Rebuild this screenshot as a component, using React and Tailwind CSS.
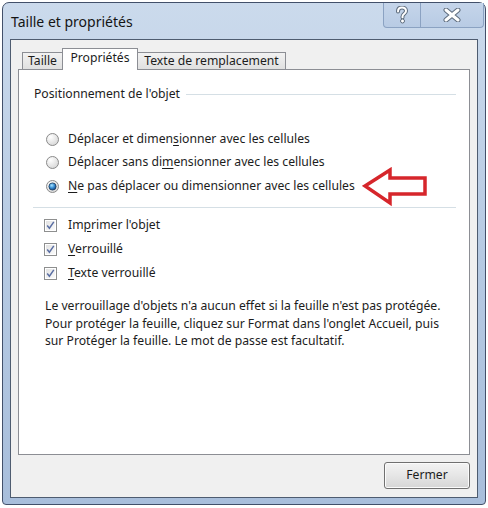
import React from "react";

function Radio({ checked }) {
  return (
    <svg width="13" height="13" viewBox="0 0 13 13" className="shrink-0">
      <defs>
        <radialGradient id="rg" cx="0.35" cy="0.3" r="0.8">
          <stop offset="0" stopColor="#ffffff" />
          <stop offset="1" stopColor="#d4d4d4" />
        </radialGradient>
        <radialGradient id="dot" cx="0.4" cy="0.35" r="0.7">
          <stop offset="0" stopColor="#a9e4ff" />
          <stop offset="0.5" stopColor="#3a8fd4" />
          <stop offset="1" stopColor="#0e3f7a" />
        </radialGradient>
      </defs>
      <circle cx="6.5" cy="6.5" r="6" fill="url(#rg)" stroke="#8a8a8a" strokeWidth="1" />
      {checked && <circle cx="6.5" cy="6.5" r="3.6" fill="url(#dot)" stroke="#1d3b5c" strokeWidth="0.8" />}
    </svg>
  );
}

function Check() {
  return (
    <svg width="13" height="13" viewBox="0 0 13 13" className="shrink-0">
      <defs>
        <linearGradient id="cg" x1="0" y1="0" x2="1" y2="1">
          <stop offset="0" stopColor="#e2e2e2" />
          <stop offset="1" stopColor="#fbfbfb" />
        </linearGradient>
      </defs>
      <rect x="0.5" y="0.5" width="12" height="12" fill="#fff" stroke="#8e8f8f" />
      <rect x="2" y="2" width="9" height="9" fill="url(#cg)" />
      <path d="M3.2 6.6 L5.4 9.2 L9.8 2.9" fill="none" stroke="#5a6ea3" strokeWidth="1.5" />
    </svg>
  );
}

function U({ children }) {
  return <span className="underline underline-offset-2">{children}</span>;
}

export default function App() {
  return (
    <div className="w-[488px] h-[508px] bg-white pl-[2px] pr-[2px] pt-[2px] pb-[3px] font-['Noto_Sans',sans-serif] text-[#1c1c1c]">
      <div className="h-full flex flex-col rounded-t-[7px] rounded-b-[4px] border border-[#42506a] bg-gradient-to-b from-[#cbdaec] via-[#b6cae3] to-[#a8bedb] px-[7px] pb-[6px]">
        <div className="h-[36px] flex items-start justify-between">
          <span className="pt-[10px] pl-[1px] text-[14px] leading-[18px] text-[#141414]">Taille et propriétés</span>
          <div className="flex -mr-[6px] h-[25px]">
            <div className="w-[38px] h-full flex items-center justify-center border border-t-0 border-[#8ba2c2] rounded-bl-[4px] bg-gradient-to-b from-[#c5d5ea] to-[#b8cbe4]">
              <svg width="14" height="18" viewBox="0 0 14 18">
                <path d="M3 5.5 C3 2.5 5 1.5 7 1.5 C9.5 1.5 11 3 11 5 C11 7.5 7.5 8 7.5 10.5 L7.5 11.5" fill="none" stroke="#5d6b7c" strokeWidth="4" strokeLinecap="round" />
                <path d="M3 5.5 C3 2.5 5 1.5 7 1.5 C9.5 1.5 11 3 11 5 C11 7.5 7.5 8 7.5 10.5 L7.5 11.5" fill="none" stroke="#ffffff" strokeWidth="2" strokeLinecap="round" />
                <circle cx="7.5" cy="15" r="2" fill="#ffffff" stroke="#5d6b7c" strokeWidth="1" />
              </svg>
            </div>
            <div className="w-[63px] h-full flex items-center justify-center border border-l-0 border-t-0 border-[#8ba2c2] rounded-br-[4px] bg-gradient-to-b from-[#c5d5ea] to-[#b8cbe4]">
              <svg width="20" height="14" viewBox="0 0 20 14">
                <path d="M4 2 L16 12 M16 2 L4 12" fill="none" stroke="#5d6b7c" strokeWidth="5" strokeLinecap="round" />
                <path d="M4 2 L16 12 M16 2 L4 12" fill="none" stroke="#ffffff" strokeWidth="3" strokeLinecap="round" />
              </svg>
            </div>
          </div>
        </div>
        <div className="flex-1 flex flex-col border border-[#4e5c70] bg-[#f0f0f0] text-[12.2px]">
          <div className="flex items-end pt-[8px] px-[7px]">
            <div className="flex items-end pl-[4px]">
              <div className="w-[41px] h-[17px] flex items-center justify-center border border-b-0 border-[#8c8e94] bg-gradient-to-b from-[#f2f2f2] to-[#e0e0e0] leading-none">Taille</div>
              <div className="relative z-10 -ml-px -mb-px w-[76px] h-[22px] flex items-start pt-[2px] justify-center border border-b-0 border-[#8c8e94] bg-white leading-[14px]">Propriétés</div>
              <div className="-ml-px w-[149px] h-[17px] flex items-center justify-center border border-b-0 border-[#8c8e94] bg-gradient-to-b from-[#f2f2f2] to-[#e0e0e0] leading-none">Texte de remplacement</div>
            </div>
          </div>
          <div className="relative mx-[7px] h-[386px] border border-[#8c8e94] bg-white">
            <div className="flex items-center pt-[16px] pl-[15px] pr-[13px] h-[32px]">
              <span className="leading-[16px]">Positionnement de l'objet</span>
              <div className="flex-1 ml-[6px] h-px bg-[#d5dfe5]" />
            </div>
            <div className="mt-[25px] flex flex-col pl-[27px]">
              <div className="h-[24px] flex items-center gap-[9px]">
                <Radio />
                <span>Déplacer et dimen<U>s</U>ionner avec les cellules</span>
              </div>
              <div className="h-[23px] flex items-center gap-[9px]">
                <Radio />
                <span>Déplacer sans di<U>m</U>ensionner avec les cellules</span>
              </div>
              <div className="h-[24px] flex items-center gap-[9px]">
                <Radio checked />
                <span><U>N</U>e pas déplacer ou dimensionner avec les cellules</span>
              </div>
            </div>
            <div className="mt-[9px] ml-[14px] mr-[13px] h-px bg-[#d5dfe5]" />
            <div className="mt-[5px] flex flex-col pl-[25px]">
              <div className="h-[24px] flex items-center gap-[11px]">
                <Check />
                <span>Im<U>p</U>rimer l'objet</span>
              </div>
              <div className="h-[24px] flex items-center gap-[11px]">
                <Check />
                <span><U>V</U>errouillé</span>
              </div>
              <div className="h-[24px] flex items-center gap-[11px]">
                <Check />
                <span><U>T</U>exte verrouillé</span>
              </div>
            </div>
            <p className="mt-[12px] pl-[26px] pr-[4px] leading-[17.5px]">
              Le verrouillage d'objets n'a aucun effet si la feuille n'est pas protégée.
              <br />
              Pour protéger la feuille, cliquez sur Format dans l'onglet Accueil, puis
              <br />
              sur Protéger la feuille. Le mot de passe est facultatif.
            </p>
            <svg className="absolute left-[343px] top-[97px]" width="68" height="40" viewBox="0 0 68 40">
              <path d="M3 19 L28 3 L28 11 L63 11 L63 27 L28 27 L28 36 Z" fill="#ffffff" stroke="#d6262b" strokeWidth="3.5" strokeLinejoin="miter" />
            </svg>
          </div>
          <div className="flex justify-end px-[7px] pt-[7px]">
            <button className="w-[86px] h-[27px] rounded-[3px] border border-[#707070] bg-gradient-to-b from-[#f3f3f3] via-[#e6e6e6] to-[#d6d6d6] text-[12.2px] text-[#1c1c1c] shadow-[inset_0_0_0_1px_#fbfbfb]">Fermer</button>
          </div>
        </div>
      </div>
    </div>
  );
}
